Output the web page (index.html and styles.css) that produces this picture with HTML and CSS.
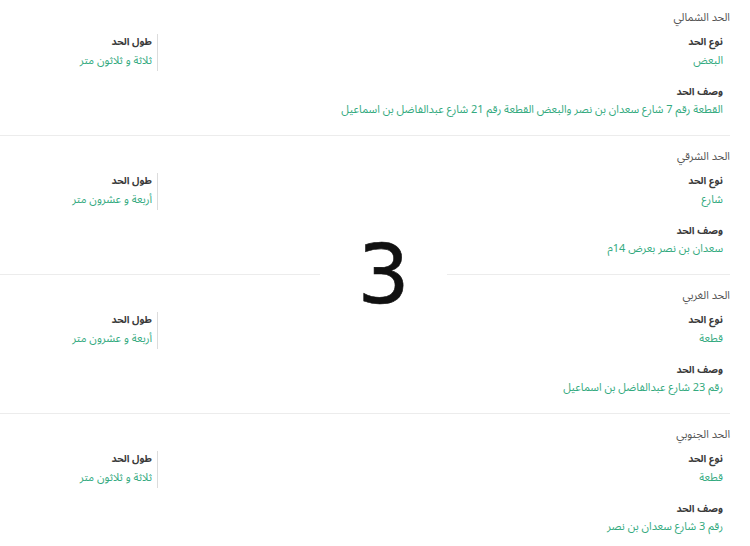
FILE: index.html
```html
<!DOCTYPE html>
<html lang="ar" dir="rtl">
<head>
<meta charset="utf-8">
<link rel="stylesheet" href="styles.css">
</head>
<body>
<main class="page">
  <section class="border">
    <h2 class="title">الحد الشمالي</h2>
    <div class="body">
      <div class="main">
        <div class="label">نوع الحد</div>
        <div class="value">البعض</div>
        <div class="label desc">وصف الحد</div>
        <div class="value">القطعة رقم 7 شارع سعدان بن نصر والبعض القطعة رقم 21 شارع عبدالفاضل بن اسماعيل</div>
      </div>
      <div class="side">
        <div class="label">طول الحد</div>
        <div class="value">ثلاثة و ثلاثون متر</div>
      </div>
    </div>
  </section>
  <section class="border">
    <h2 class="title">الحد الشرقي</h2>
    <div class="body">
      <div class="main">
        <div class="label">نوع الحد</div>
        <div class="value">شارع</div>
        <div class="label desc">وصف الحد</div>
        <div class="value">سعدان بن نصر بعرض 14م</div>
      </div>
      <div class="side">
        <div class="label">طول الحد</div>
        <div class="value">أربعة و عشرون متر</div>
      </div>
    </div>
  </section>
  <section class="border">
    <h2 class="title">الحد الغربي</h2>
    <div class="body">
      <div class="main">
        <div class="label">نوع الحد</div>
        <div class="value">قطعة</div>
        <div class="label desc">وصف الحد</div>
        <div class="value">رقم 23 شارع عبدالفاضل بن اسماعيل</div>
      </div>
      <div class="side">
        <div class="label">طول الحد</div>
        <div class="value">أربعة و عشرون متر</div>
      </div>
    </div>
  </section>
  <section class="border">
    <h2 class="title">الحد الجنوبي</h2>
    <div class="body">
      <div class="main">
        <div class="label">نوع الحد</div>
        <div class="value">قطعة</div>
        <div class="label desc">وصف الحد</div>
        <div class="value">رقم 3 شارع سعدان بن نصر</div>
      </div>
      <div class="side">
        <div class="label">طول الحد</div>
        <div class="value">ثلاثة و ثلاثون متر</div>
      </div>
    </div>
  </section>
</main>
<div class="page-number">3</div>
</body>
</html>
```
FILE: styles.css
```css
html, body {
  margin: 0;
  padding: 0;
  background: #ffffff;
}
body {
  font-family: "Noto Sans Arabic", "DejaVu Sans", "Noto Sans", sans-serif;
  font-size: 10px;
  overflow: hidden;
  position: relative;
  height: 546px;
}
.page {
  margin-right: 20px;
}
.border {
  padding: 13px 0 17px;
  border-bottom: 1px solid #ececec;
}
.border:first-child {
  padding-top: 10px;
}
.title {
  margin: 0;
  font-size: 11px;
  line-height: 16px;
  font-weight: normal;
  color: #555555;
}
.body {
  display: flex;
  margin-top: 8px;
  padding-right: 7px;
}
.main {
  flex: 1;
}
.side {
  width: 152px;
  align-self: flex-start;
  padding-right: 5px;
  border-right: 1px solid #dcdcdc;
  padding-bottom: 2px;
}
.label {
  font-size: 10px;
  line-height: 16px;
  color: #3a3a3a;
  font-weight: bold;
}
.label.desc {
  margin-top: 16px;
  line-height: 14px;
}
.value {
  font-size: 11px;
  line-height: 16px;
  color: #34aa80;
  margin-top: 3px;
}
.page-number {
  position: absolute;
  left: 320px;
  top: 236px;
  width: 127px;
  height: 78px;
  background: #ffffff;
  color: #111111;
  font-family: "DejaVu Sans", sans-serif;
  font-size: 82px;
  line-height: 78px;
  text-align: center;
  -webkit-text-stroke: 0.6px #111111;
}
```
